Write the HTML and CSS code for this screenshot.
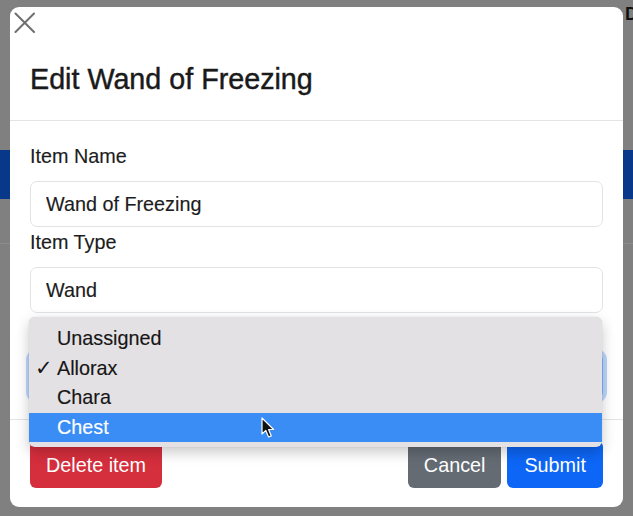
FILE: index.html
```html
<!DOCTYPE html>
<html lang="en">
<head>
<meta charset="utf-8">
<title>Edit Wand of Freezing</title>
<link rel="stylesheet" href="styles.css">
</head>
<body>
<span class="edge-letter">D</span>
<div class="modal">
  <div class="modal-header">
    <button class="btn-close" type="button" aria-label="Close">
      <svg width="22" height="21" viewBox="0 0 22 21"><path d="M1.5 1.5 L20 20 M20 1.5 L1.5 20" stroke="#6f6f6f" stroke-width="2" fill="none" stroke-linecap="round"/></svg>
    </button>
    <h5 class="modal-title">Edit Wand of Freezing</h5>
  </div>
  <div class="modal-body">
    <label class="form-label">Item Name</label>
    <input class="form-control" type="text" value="Wand of Freezing" readonly>
    <label class="form-label">Item Type</label>
    <input class="form-control" type="text" value="Wand" readonly>
    <label class="form-label">Owner</label>
    <div class="form-select focused">Allorax</div>
  </div>
  <div class="modal-footer">
    <button class="btn btn-danger" type="button">Delete item</button>
    <button class="btn btn-secondary" type="button">Cancel</button>
    <button class="btn btn-primary" type="button">Submit</button>
  </div>

  <ul class="dropdown">
    <li class="option"><span class="check"></span>Unassigned</li>
    <li class="option"><span class="check">✓</span>Allorax</li>
    <li class="option"><span class="check"></span>Chara</li>
    <li class="option active"><span class="check"></span>Chest</li>
  </ul>

  <svg class="cursor" width="15" height="22" viewBox="0 0 15 22">
    <path d="M1 1 L1 17 L4.8 13.4 L7.6 20 L10.3 18.9 L7.6 12.5 L12.6 12.5 Z" fill="#111" stroke="#fff" stroke-width="1.2" stroke-linejoin="round"/>
  </svg>
</div>
</body>
</html>
```

FILE: styles.css
```css
* { box-sizing: border-box; }

html, body {
  margin: 0;
  padding: 0;
  width: 633px;
  height: 516px;
  overflow: hidden;
}

body {
  position: relative;
  font-family: "Liberation Sans", Arial, sans-serif;
  color: #212529;
  background-color: #808080;
  background-image:
    linear-gradient(to bottom, transparent 243px, #8c8c8c 243px, #8c8c8c 244px, transparent 244px),
    linear-gradient(to bottom, transparent 150px, #07388a 150px, #07388a 199px, transparent 199px);
  padding-top: 7px;
}

.edge-letter {
  position: absolute;
  left: 625px;
  top: 4px;
  font-size: 18px;
  font-weight: bold;
  color: #111;
}

.modal {
  position: relative;
  margin: 0 10px;
  width: 613px;
  height: 500px;
  background: #fff;
  border-radius: 9px;
}

.modal-header {
  display: flex;
  flex-direction: column;
  align-items: flex-start;
  padding: 5px 20px 0;
  height: 114px;
  border-bottom: 1px solid #e3e4e6;
}

.btn-close {
  margin: 0 0 0 -16px;
  padding: 0;
  border: 0;
  background: none;
  width: 22px;
  height: 21px;
  display: block;
}

.btn-close svg { display: block; }

.modal-title {
  margin: 28px 0 0;
  font-size: 28.7px;
  line-height: 36px;
  font-weight: 500;
  color: #1a1a1a;
  -webkit-text-stroke: 0.45px #1a1a1a;
}

.modal-body {
  display: flex;
  flex-direction: column;
  padding: 20px 20px 20px;
  border-bottom: 1px solid #e3e4e6;
}

.form-label {
  font-size: 19.8px;
  line-height: 30px;
  margin-bottom: 10px;
  color: #1c1c1c;
  -webkit-text-stroke: 0.15px #1c1c1c;
}

.form-control,
.form-select {
  display: block;
  width: 100%;
  height: 46px;
  padding: 7px 15px;
  font-family: inherit;
  font-size: 19.8px;
  line-height: 30px;
  color: #1c1c1c;
  -webkit-text-stroke: 0.15px #1c1c1c;
  background: #fff;
  border: 1px solid #e2e3e5;
  border-radius: 7px;
  outline: none;
}

.form-select.focused {
  border-color: #86b7fe;
  box-shadow: 0 0 0 4px rgba(13, 110, 253, 0.28);
}

.modal-footer {
  display: flex;
  align-items: center;
  gap: 6px;
  padding: 21px 20px 0;
}

.btn {
  height: 47px;
  padding: 0 16px;
  font-family: inherit;
  font-size: 19.8px;
  line-height: 30px;
  color: #fff;
  border: 0;
  border-radius: 6px;
}

.btn-danger { background: #d52e3d; margin-right: auto; }
.btn-secondary { background: #646b73; }
.btn-primary { background: #0d66f5; padding: 0 17px; }

.dropdown {
  position: absolute;
  left: 19px;
  top: 310px;
  width: 573px;
  margin: 0;
  padding: 7px 0 5px;
  list-style: none;
  background: #e4e1e4;
  border-radius: 6px;
  box-shadow: 0 5px 14px rgba(0, 0, 0, 0.22), 0 0 1px rgba(0, 0, 0, 0.2);
}

.option {
  display: flex;
  align-items: center;
  height: 29.5px;
  padding-left: 6px;
  font-size: 19.8px;
  line-height: 29.5px;
  color: #161616;
  -webkit-text-stroke: 0.15px #161616;
}

.check {
  width: 22px;
  flex: none;
  font-family: "DejaVu Sans", sans-serif;
  font-size: 21px;
  -webkit-text-stroke: 0;
}

.option.active {
  background: #3b8df6;
  color: #fff;
  -webkit-text-stroke: 0.15px #fff;
}

.cursor {
  position: absolute;
  left: 251px;
  top: 410px;
}
```
